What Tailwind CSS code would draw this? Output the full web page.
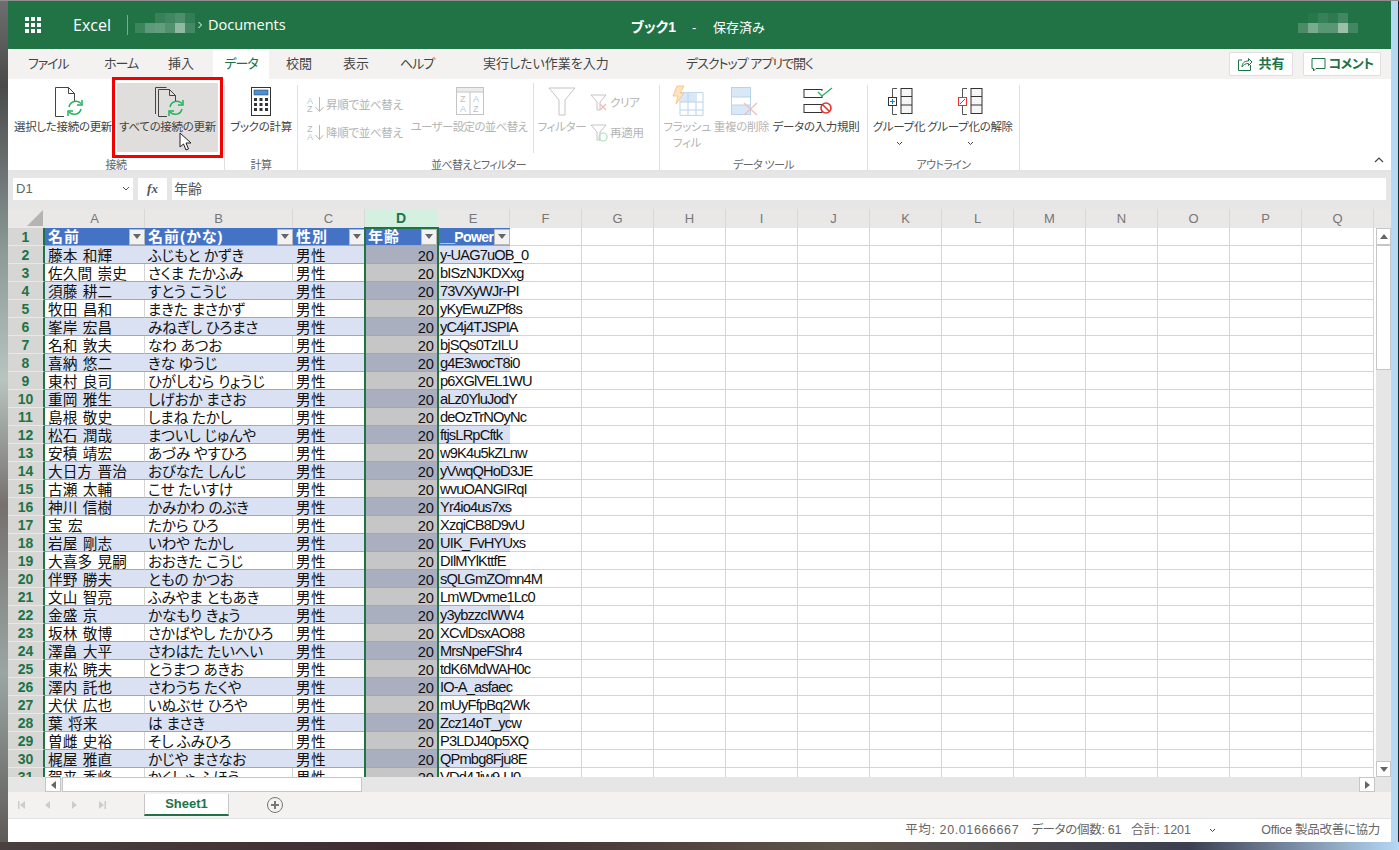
<!DOCTYPE html>
<html lang="ja">
<head>
    <meta charset="UTF-8" />
    <title>ブック1 - Excel</title>
    <script src="https://cdn.jsdelivr.net/npm/@tailwindcss/browser@4"></script>
</head>
<body class="bg-[#3a3535] font-['Liberation_Sans','Noto_Sans_CJK_JP',sans-serif] [font-feature-settings:'palt'] overflow-hidden">
<div class="w-[1399px] h-[850px] flex flex-col overflow-hidden">
    <div class="h-px bg-[#8f8f8f]"></div>
    <div class="flex h-[841px]">
        <div class="w-2 bg-[linear-gradient(180deg,#6e6e6e_0%,#4a4a4a_10%,#8c9a98_30%,#b8c4c0_45%,#76706e_60%,#9aa6a4_80%,#5e5a58_100%)]"></div>

        <!-- Excel window -->
        <div class="w-[1383px] flex flex-col bg-white">
            <!-- Title bar -->
            <div class="h-[48px] bg-[#217346] flex items-center text-white relative shrink-0">
                <svg class="ml-[17px]" width="16" height="16" viewBox="0 0 16 16" fill="#fff">
                    <rect x="0" y="0" width="4" height="4"/><rect x="6" y="0" width="4" height="4"/><rect x="12" y="0" width="4" height="4"/>
                    <rect x="0" y="6" width="4" height="4"/><rect x="6" y="6" width="4" height="4"/><rect x="12" y="6" width="4" height="4"/>
                    <rect x="0" y="12" width="4" height="4"/><rect x="6" y="12" width="4" height="4"/><rect x="12" y="12" width="4" height="4"/>
                </svg>
                <span class="ml-[32px] w-[54px] text-[16px] font-['Open_Sans',sans-serif]">Excel</span>
                <div class="w-px h-[20px] bg-white/40"></div>
                <svg class="ml-[7px]" width="60" height="24" viewBox="0 0 60 24" fill="#fff">
                    <rect x="0" y="10" width="10" height="10" opacity=".12"/><rect x="10" y="10" width="10" height="10" opacity=".28"/>
                    <rect x="20" y="0" width="10" height="10" opacity=".1"/><rect x="20" y="10" width="10" height="10" opacity=".3"/>
                    <rect x="30" y="0" width="10" height="10" opacity=".14"/><rect x="30" y="10" width="10" height="10" opacity=".22"/>
                    <rect x="40" y="0" width="10" height="10" opacity=".2"/><rect x="40" y="10" width="10" height="10" opacity=".5"/>
                    <rect x="50" y="0" width="10" height="10" opacity=".08"/><rect x="50" y="10" width="10" height="10" opacity=".16"/>
                </svg>
                <svg class="ml-[2px]" width="6" height="8" viewBox="0 0 6 8" fill="none" stroke="#fff"><path d="M1.5 1l3 3-3 3"/></svg>
                <span class="ml-[5px] text-[14.500px] font-['Open_Sans',sans-serif]">Documents</span>
                <div class="absolute left-[623px] top-[16px] flex items-center">
                    <span class="text-[14px] font-bold w-[61px]">ブック1</span>
                    <span class="text-[13px] w-[21px]">-</span>
                    <span class="text-[13px]">保存済み</span>
                </div>
                <svg class="absolute left-[1290px] top-[12px]" width="60" height="26" viewBox="0 0 60 26" fill="#fff">
                    <rect x="10" y="0" width="10" height="10" opacity=".03"/><rect x="20" y="0" width="10" height="10" opacity=".1"/>
                    <rect x="30" y="0" width="10" height="10" opacity=".06"/><rect x="40" y="0" width="10" height="10" opacity=".15"/>
                    <rect x="0" y="10" width="10" height="10" opacity=".18"/><rect x="10" y="10" width="10" height="10" opacity=".4"/>
                    <rect x="20" y="10" width="10" height="10" opacity=".25"/><rect x="30" y="10" width="10" height="10" opacity=".25"/>
                    <rect x="40" y="10" width="10" height="10" opacity=".55"/><rect x="50" y="10" width="10" height="10" opacity=".15"/>
                </svg>
            </div>

            <!-- Tabs -->
            <div class="h-[30px] bg-[#f3f2f1] flex items-center text-[13px] text-[#444] relative shrink-0">
                <span class="ml-[20px] w-[76px] tracking-[-1.200px]">ファイル</span>
                <span class="w-[64px] tracking-[-1px]">ホーム</span>
                <span class="w-[45px]">挿入</span>
                <span class="w-[56px] h-full bg-white text-[#217346] flex items-center justify-center tracking-[-1px]">データ</span>
                <span class="ml-[17px] w-[57px]">校閲</span>
                <span class="w-[57px]">表示</span>
                <span class="w-[83px] tracking-[-1px]">ヘルプ</span>
                <span class="w-[203px]">実行したい作業を入力</span>
                <span class="tracking-[-1px]">デスクトップ アプリで開く</span>
                <div class="ml-auto mr-[10px] flex gap-[10px] font-bold text-[#217346]">
                    <div class="w-[64px] h-[24px] bg-white border border-[#e1dfdd] rounded-[2px] flex items-center justify-center gap-[5px]">
                        <svg width="16" height="16" viewBox="0 0 16 16" fill="none" stroke="#217346"><path d="M5 4H1.5v10.5h12V9"/><path d="M5 11c0-4 2.5-6 6.5-6V2.5L15 6l-3.500 3.500V7.500C8.500 7.500 6.500 8.500 5 11z"/></svg>
                        <span>共有</span>
                    </div>
                    <div class="w-[78px] h-[24px] bg-white border border-[#e1dfdd] rounded-[2px] flex items-center justify-center gap-[3px]">
                        <svg width="15" height="15" viewBox="0 0 15 15" fill="none" stroke="#217346"><path d="M1 1.500h13v10H5l-2.500 2.500v-2.500H1z"/></svg>
                        <span class="tracking-[-.6px]">コメント</span>
                    </div>
                </div>
            </div>

            <!-- Ribbon -->
            <div class="h-[93px] bg-white border-b-2 border-[#e4e4e4] flex relative shrink-0 text-[11.500px] tracking-[-.3px] leading-[16px] text-[#444]">
                <!-- 接続 -->
                <div class="w-[216px] flex flex-col">
                    <div class="h-[76px] flex pt-[4px] pl-px">
                        <div class="w-[108px] flex flex-col items-center pt-[4px]">
                            <svg class="ml-[9px]" width="30" height="32" viewBox="0 0 30 32" fill="none">
                                <path d="M11 29.500H2.500V.500h13l6 6v8" stroke="#444"/><path d="M15.500.500v6h6" stroke="#444"/>
                                <path d="M16 20a7 7 0 0 1 12-3.500M28 22a7 7 0 0 1-12 3" stroke="#1fb35c" stroke-width="1.500"/>
                                <path d="M29 13v5h-5M15 29v-5h5" stroke="#1fb35c" stroke-width="1.500"/>
                            </svg>
                            <span class="whitespace-nowrap">選択した接続の更新</span>
                        </div>
                        <div class="w-[101px] h-[69px] bg-[#dfdedc] flex flex-col items-center pt-[4px]">
                            <svg class="ml-[3px]" width="30" height="32" viewBox="0 0 30 32" fill="none">
                                <path d="M1.500 27V.500h11" stroke="#444"/><path d="M13 29.500H4.500V2.500h11l6 6v6" stroke="#444"/><path d="M15.500 2.500v6h6" stroke="#444"/>
                                <path d="M16 20a7 7 0 0 1 12-3.500M28 22a7 7 0 0 1-12 3" stroke="#1fb35c" stroke-width="1.500"/>
                                <path d="M29 13v5h-5M15 29v-5h5" stroke="#1fb35c" stroke-width="1.500"/>
                            </svg>
                            <span class="whitespace-nowrap">すべての接続の更新</span>
                        </div>
                    </div>
                    <div class="h-[15px] pt-[2px] text-center text-[11px] tracking-[-.6px] text-[#666]">接続</div>
                </div>
                <div class="w-px h-[85px] mt-[6px] bg-[#e1dfdd]"></div>

                <!-- 計算 -->
                <div class="w-[72px] flex flex-col">
                    <div class="h-[76px] flex flex-col items-center pt-[8px]">
                        <svg class="mb-[3px]" width="20" height="29" viewBox="0 0 20 29" fill="none">
                            <rect x=".5" y=".5" width="19" height="28" stroke="#333"/>
                            <rect x="3" y="3" width="14" height="5" fill="#4a90d9" stroke="#333" stroke-width=".5"/>
                            <g fill="#333">
                                <rect x="3" y="11" width="3" height="3"/><rect x="8.500" y="11" width="3" height="3"/><rect x="14" y="11" width="3" height="3"/>
                                <rect x="3" y="16" width="3" height="3"/><rect x="8.500" y="16" width="3" height="3"/><rect x="14" y="16" width="3" height="3"/>
                                <rect x="3" y="21" width="3" height="3"/><rect x="8.500" y="21" width="3" height="3"/><rect x="14" y="21" width="3" height="3"/>
                            </g>
                        </svg>
                        <span class="whitespace-nowrap">ブックの計算</span>
                    </div>
                    <div class="h-[15px] pt-[2px] text-center text-[11px] tracking-[-.6px] text-[#666]">計算</div>
                </div>
                <div class="w-px h-[85px] mt-[6px] bg-[#e1dfdd]"></div>

                <!-- 並べ替えとフィルター -->
                <div class="w-[361px] flex flex-col text-[#b4b4b4]">
                    <div class="h-[76px] flex">
                        <div class="w-[111px] pl-[9px] pt-[17px] flex flex-col gap-[11px]">
                            <div class="flex items-center h-[17px] gap-[2px]">
                                <svg width="17" height="17" viewBox="0 0 17 17" font-size="9" font-family="Liberation Sans"><text x="0" y="8" fill="#a9d0ee">A</text><text x="0" y="16" fill="#b8b8b8">Z</text><path d="M12.500 1v14M8.500 11l4 4.500 4-4.500" fill="none" stroke="#b8b8b8"/></svg>
                                <span class="whitespace-nowrap">昇順で並べ替え</span>
                            </div>
                            <div class="flex items-center h-[17px] gap-[2px]">
                                <svg width="17" height="17" viewBox="0 0 17 17" font-size="9" font-family="Liberation Sans"><text x="0" y="8" fill="#b8b8b8">Z</text><text x="0" y="16" fill="#a9d0ee">A</text><path d="M12.500 1v14M8.500 11l4 4.500 4-4.500" fill="none" stroke="#b8b8b8"/></svg>
                                <span class="whitespace-nowrap">降順で並べ替え</span>
                            </div>
                        </div>
                        <div class="w-[124px] flex flex-col items-center pt-[8px]">
                            <svg class="mb-[4px] ml-[-3px]" width="28" height="28" viewBox="0 0 28 28" font-size="9" font-family="Liberation Sans" fill="none">
                                <rect x=".5" y=".5" width="27" height="27" stroke="#c4c4c4"/><rect x="1" y="1" width="26" height="4" fill="#ececec"/>
                                <path d="M.5 5h27M14 5v23" stroke="#c4c4c4"/>
                                <text x="4" y="15" fill="#c0c0c0">Z</text><text x="4" y="25" fill="#a9d0ee">A</text>
                                <text x="17" y="15" fill="#a9d0ee">A</text><text x="17" y="25" fill="#c0c0c0">Z</text>
                            </svg>
                            <span class="whitespace-nowrap ml-[-4px] tracking-[-.65px]">ユーザー設定の並べ替え</span>
                        </div>
                        <div class="w-px h-[70px] mt-[4px] bg-[#e1dfdd]"></div>
                        <div class="w-[56px] flex flex-col items-center pt-[8px]">
                            <svg class="mb-[3px]" width="28" height="29" viewBox="0 0 28 29" fill="none" stroke="#c4c4c4"><path d="M1 1h26L17 13v15h-6V13z"/></svg>
                            <span class="whitespace-nowrap">フィルター</span>
                        </div>
                        <div class="flex flex-col pt-[15px] gap-[12px]">
                            <div class="flex items-center h-[18px] gap-[2px]">
                                <svg width="18" height="18" viewBox="0 0 18 18" fill="none"><path d="M1 1h15l-6 7v8H7V8z" stroke="#c4c4c4"/><path d="M10 10l6 6M16 10l-6 6" stroke="#f2b8b8" stroke-width="1.200"/></svg>
                                <span>クリア</span>
                            </div>
                            <div class="flex items-center h-[18px] gap-[2px]">
                                <svg width="18" height="18" viewBox="0 0 18 18" fill="none"><path d="M1 1h15l-6 7v8H7V8z" stroke="#c4c4c4"/><circle cx="13" cy="13" r="4" stroke="#a8dfbd" stroke-width="1.200"/></svg>
                                <span>再適用</span>
                            </div>
                        </div>
                    </div>
                    <div class="h-[15px] pt-[2px] text-center text-[11px] tracking-[-.6px] text-[#666]">並べ替えとフィルター</div>
                </div>
                <div class="w-px h-[85px] mt-[6px] bg-[#e1dfdd]"></div>

                <!-- データ ツール -->
                <div class="w-[207px] flex flex-col text-[#b4b4b4]">
                    <div class="h-[76px] flex">
                        <div class="w-[54px] flex flex-col items-center pt-[6px] text-center">
                            <svg class="mb-[2px] ml-[2px]" width="32" height="32" viewBox="0 0 32 32" fill="none">
                                <path d="M8 8h23v24H8z" transform="scale(1 .95)" stroke="#b8d4ea"/><rect x="9" y="8" width="14" height="9" fill="#d8e8f6"/>
                                <path d="M8 17h23M8 25h23M16 8v23M24 8v23" stroke="#b8d4ea"/>
                                <path d="M5 1h7L8 8h4L4 19l2-8H1z" fill="#fde3c4" stroke="#f7c88d"/>
                            </svg>
                            <span class="whitespace-nowrap">フラッシュ<br />フィル</span>
                        </div>
                        <div class="w-[55px] flex flex-col items-center pt-[8px]">
                            <svg class="mb-[3px] ml-[11px]" width="32" height="29" viewBox="0 0 32 29" fill="none">
                                <rect x=".5" y=".5" width="19" height="27" stroke="#b8d4ea"/><rect x="1" y="1" width="18" height="9" fill="#d8e8f6"/><rect x="1" y="18" width="18" height="9" fill="#d8e8f6"/>
                                <path d="M1 10h18M1 18h18" stroke="#b8d4ea"/>
                                <path d="M13 16l13 12M26 16L13 28" stroke="#f6bcbc" stroke-width="1.300"/>
                            </svg>
                            <span class="whitespace-nowrap">重複の削除</span>
                        </div>
                        <div class="w-[94px] flex flex-col items-center pt-[8px] text-[#444]">
                            <svg class="mb-[3px] ml-[3px]" width="32" height="29" viewBox="0 0 32 29" fill="none">
                                <rect x="2" y="2.500" width="18" height="8" stroke="#333" fill="#fff"/><rect x="2" y="17.500" width="18" height="8" stroke="#333" fill="#fff"/>
                                <path d="M16 5l4 4 10-8" stroke="#1fb35c" stroke-width="1.300" fill="#fff"/>
                                <circle cx="24" cy="21" r="5" stroke="#e8322c" stroke-width="1.600" fill="#fff"/><path d="M20.500 17.500l7 7" stroke="#e8322c" stroke-width="1.600"/>
                            </svg>
                            <span class="whitespace-nowrap">データの入力規則</span>
                        </div>
                    </div>
                    <div class="h-[15px] pt-[2px] text-center text-[11px] tracking-[-.6px] text-[#666]">データ ツール</div>
                </div>
                <div class="w-px h-[85px] mt-[6px] bg-[#e1dfdd]"></div>

                <!-- アウトライン -->
                <div class="w-[151px] flex flex-col">
                    <div class="h-[76px] flex">
                        <div class="w-[62px] flex flex-col items-center pt-[8px]">
                            <svg class="mb-[3px] ml-[2px]" width="26" height="29" viewBox="0 0 26 29" fill="none">
                                <path d="M10 1.500H5.500v9M5.500 18v9.500H10" stroke="#555"/>
                                <rect x="14" y="1.500" width="11" height="25" stroke="#333" fill="#f6f6f6"/><path d="M14 9.500h11M14 18h11" stroke="#333"/>
                                <rect x="1.500" y="10.500" width="8" height="8" stroke="#333" fill="#fff"/><path d="M5.500 12v5M3 14.500h5" stroke="#0f7fd8"/>
                            </svg>
                            <span class="whitespace-nowrap">グループ化</span>
                            <svg class="mt-[6px]" width="7" height="5" viewBox="0 0 7 5" fill="none" stroke="#444"><path d="M1 1l2.500 2.500L6 1"/></svg>
                        </div>
                        <div class="w-[80px] flex flex-col items-center pt-[8px]">
                            <svg class="mb-[3px]" width="26" height="29" viewBox="0 0 26 29" fill="none">
                                <path d="M10 1.500H5.500v9M5.500 18v9.500H10" stroke="#555"/>
                                <rect x="14" y="1.500" width="11" height="25" stroke="#333" fill="#f6f6f6"/><path d="M14 9.500h11M14 18h11" stroke="#333"/>
                                <rect x="1.500" y="10.500" width="8" height="8" stroke="#e8322c" fill="#fff"/><path d="M3 17l5-5" stroke="#e8322c"/>
                            </svg>
                            <span class="whitespace-nowrap">グループ化の解除</span>
                            <svg class="mt-[6px]" width="7" height="5" viewBox="0 0 7 5" fill="none" stroke="#444"><path d="M1 1l2.500 2.500L6 1"/></svg>
                        </div>
                    </div>
                    <div class="h-[15px] pt-[2px] text-center text-[11px] tracking-[-.6px] text-[#666]">アウトライン</div>
                </div>
                <div class="w-px h-[85px] mt-[6px] bg-[#e1dfdd]"></div>

                <svg class="absolute left-[1366px] top-[77px]" width="10" height="7" viewBox="0 0 10 7" fill="none" stroke="#444" stroke-width="1.200"><path d="M1 6l4-4 4 4"/></svg>

                <!-- highlight and mouse pointer over the refresh button -->
                <div class="absolute left-[104px] top-[-2px] w-[111px] h-[81px] border-[3px] border-[#f30000]"></div>
                <svg class="absolute left-[171px] top-[53px]" width="14" height="20" viewBox="0 0 14 20"><path d="M1 1v14l3.500-3 2.500 6 2.500-1-2.500-6H12z" fill="#fff" stroke="#222"/></svg>
            </div>

            <!-- Formula bar -->
            <div class="h-[37px] bg-[#e6e6e6] flex pt-[6px] pl-[5px] pr-[5px] gap-[5px] text-[13px] shrink-0">
                <div class="w-[120px] h-[22px] bg-white flex items-center justify-between px-[3px] text-[#666]">
                    <span>D1</span>
                    <svg width="8" height="6" viewBox="0 0 8 6" fill="none" stroke="#555"><path d="M1 1l3 3 3-3"/></svg>
                </div>
                <div class="w-[29px] h-[22px] bg-white flex items-center justify-center text-[#555] italic font-['Liberation_Serif',serif] font-bold">fx</div>
                <div class="flex-1 h-[22px] bg-white flex items-center px-[2px] text-[#555] text-[14px]">年齢</div>
            </div>

            <!-- Sheet -->
            <div class="flex-1 flex flex-col min-h-0">
                <div class="h-[568px] relative overflow-hidden flex flex-col shrink-0">
                    <div id="colHead" class="h-[19px] flex bg-[#e9e8e6] shrink-0"></div>
                    <div id="rows" class="flex flex-col"></div>
                    <!-- selected column D -->
                    <div class="absolute left-[356px] top-[18px] w-[75px] h-[600px] border-2 border-[#217346]"></div>
                    <!-- vertical scrollbar -->
                    <div class="absolute left-[1368px] top-[19px] w-[15px] h-[549px] bg-[#e6e6e6] flex flex-col">
                        <div class="h-[17px] bg-white border border-[#c6c6c6] flex items-center justify-center">
                            <svg width="8" height="5" viewBox="0 0 8 5" fill="#666"><path d="M4 0l4 5H0z"/></svg>
                        </div>
                        <div class="h-[125px] bg-white border border-[#c6c6c6]"></div>
                        <div class="h-[16px] mt-auto bg-white border border-[#c6c6c6] flex items-center justify-center">
                            <svg width="8" height="5" viewBox="0 0 8 5" fill="#666"><path d="M4 5l4-5H0z"/></svg>
                        </div>
                    </div>
                </div>

                <!-- horizontal scrollbar -->
                <div class="h-[15px] bg-[#e6e6e6] flex pl-[37px] shrink-0 relative">
                    <div class="w-[16px] h-[15px] bg-white border border-[#c6c6c6] flex items-center justify-center">
                        <svg width="5" height="8" viewBox="0 0 5 8" fill="#666"><path d="M0 4l5-4v8z"/></svg>
                    </div>
                    <div class="w-[300px] h-[15px] ml-px bg-white border border-[#c6c6c6]"></div>
                    <div class="absolute left-[1351px] top-0 w-[16px] h-[15px] bg-white border border-[#c6c6c6] flex items-center justify-center">
                        <svg width="5" height="8" viewBox="0 0 5 8" fill="#666"><path d="M5 4L0 0v8z"/></svg>
                    </div>
                </div>

                <!-- sheet tabs -->
                <div class="h-[27px] bg-[#f3f2f1] border-b border-[#e1e1e1] flex items-start shrink-0">
                    <div class="w-[136px] h-[26px] flex items-center pl-[10px] gap-[20px]">
                        <svg width="7" height="8" viewBox="0 0 7 8" fill="#ccc"><path d="M0 0h1.500v8H0zM7 0v8L2 4z"/></svg>
                        <svg width="5" height="8" viewBox="0 0 5 8" fill="#ccc"><path d="M5 0v8L0 4z"/></svg>
                        <svg class="ml-[2px]" width="5" height="8" viewBox="0 0 5 8" fill="#ccc"><path d="M0 0v8l5-4z"/></svg>
                        <svg class="ml-[2px]" width="7" height="8" viewBox="0 0 7 8" fill="#ccc"><path d="M5.500 0H7v8H5.500zM0 0v8l5-4z"/></svg>
                    </div>
                    <div class="w-[85px] h-[22px] mt-[2px] bg-white border-x border-[#c6c6c6] border-b-2 border-b-[#217346] flex items-center justify-center text-[13px] font-bold text-[#217346]">Sheet1</div>
                    <svg class="ml-[38px] mt-[5px]" width="16" height="16" viewBox="0 0 16 16" fill="none" stroke="#777"><circle cx="8" cy="8" r="7.500"/><path d="M8 4v8M4 8h8" stroke-width="2"/></svg>
                </div>

                <!-- status bar -->
                <div class="h-[22px] flex items-center justify-end text-[12.500px] text-[#666] pr-[11px] shrink-0">
                    <span class="w-[126px] whitespace-nowrap tracking-[.6px]">平均: 20.01666667</span>
                    <span class="w-[100px] whitespace-nowrap tracking-[-.3px]">データの個数: 61</span>
                    <span class="w-[78px] whitespace-nowrap">合計: 1201</span>
                    <svg class="mr-[45px]" width="7" height="5" viewBox="0 0 7 5" fill="none" stroke="#444"><path d="M1 1l2.500 2.500L6 1"/></svg>
                    <span class="whitespace-nowrap tracking-[-.3px]">Office 製品改善に協力</span>
                </div>
            </div>
        </div>

        <div class="w-2 bg-[linear-gradient(90deg,#b5d8f5_0%,#b5d8f5_85%,#20242c_85%)]"></div>
    </div>
    <div class="h-2 bg-[linear-gradient(90deg,#4a4040_0%,#3d2a30_30%,#5e5448_60%,#3c3f52_85%,#b5d8f5_100%)]"></div>
</div>

<script>
    const people = `藤本 和輝|ふじもと かずき|y-UAG7uOB_0
佐久間 崇史|さくま たかふみ|bISzNJKDXxg
須藤 耕二|すとう こうじ|73VXyWJr-PI
牧田 昌和|まきた まさかず|yKyEwuZPf8s
峯岸 宏昌|みねぎし ひろまさ|yC4j4TJSPIA
名和 敦夫|なわ あつお|bjSQs0TzILU
喜納 悠二|きな ゆうじ|g4E3wocT8i0
東村 良司|ひがしむら りょうじ|p6XGlVEL1WU
重岡 雅生|しげおか まさお|aLz0YluJodY
島根 敬史|しまね たかし|deOzTrNOyNc
松石 潤哉|まついし じゅんや|ftjsLRpCftk
安積 靖宏|あづみ やすひろ|w9K4u5kZLnw
大日方 晋治|おびなた しんじ|yVwqQHoD3JE
古瀬 太輔|こせ たいすけ|wvuOANGIRqI
神川 信樹|かみかわ のぶき|Yr4io4us7xs
宝 宏|たから ひろ|XzqiCB8D9vU
岩屋 剛志|いわや たかし|UIK_FvHYUxs
大喜多 晃嗣|おおきた こうじ|DIlMYlKttfE
伴野 勝夫|ともの かつお|sQLGmZOmn4M
文山 智亮|ふみやま ともあき|LmWDvme1Lc0
金盛 京|かなもり きょう|y3ybzzcIWW4
坂林 敬博|さかばやし たかひろ|XCvlDsxAO88
澤畠 大平|さわはた たいへい|MrsNpeFShr4
東松 暁夫|とうまつ あきお|tdK6MdWAH0c
澤内 託也|さわうち たくや|IO-A_asfaec
犬伏 広也|いぬぶせ ひろや|mUyFfpBq2Wk
葉 将来|は まさき|Zcz14oT_ycw
曽雌 史裕|そし ふみひろ|P3LDJ40p5XQ
梶屋 雅直|かじや まさなお|QPmbg8Fju8E
賀来 秀峰|かくしゃ ふほう|VDd4Jjw9-U0`.split("\n").map(l => l.split("|"));

    const emptyCells = '<div class="w-[72px] h-full border-r border-b border-[#d4d4d4]"></div>'.repeat(12);
    const rowHead = n => `<div class="w-[37px] h-full bg-[#d6d6d4] border-r-2 border-[#217346] border-b border-b-[#e8e8e8] flex items-center justify-center text-[14px] font-bold text-[#217346] pt-[2px]">${n}</div>`;
    const filterBtn = '<div class="w-4 h-4 bg-[#f2f2f2] border border-[#b8b8b8] flex items-center justify-center shrink-0"><svg width="8" height="5" viewBox="0 0 8 5" fill="#666"><path d="M0 0h8L4 5z"/></svg></div>';
    const headCell = (width, label, type = "text-[15px] tracking-[1px]") => `<div class="${width} h-full bg-[#4472c4] flex items-center text-white font-bold ${type} border-b border-[#8ea9db]"><span class="flex-1 min-w-0 overflow-hidden whitespace-nowrap pl-[3px] pt-[2px]">${label}</span>${filterBtn}</div>`;

    document.getElementById("colHead").innerHTML =
        '<div class="w-[37px] h-full flex items-end justify-end pr-[2px] pb-[2px]"><svg width="16" height="16" viewBox="0 0 16 16" fill="#b4b4b4"><path d="M16 0v16H0z"/></svg></div>' +
        [["A", "w-[100px]"], ["B", "w-[148px]"], ["C", "w-[72px]"]].map(([c, w]) =>
            `<div class="${w} h-full flex items-center justify-center text-[13px] text-[#777] border-r border-[#d8d8d8]">${c}</div>`).join("") +
        '<div class="w-[72px] h-full flex items-center justify-center text-[14px] font-bold text-[#217346] bg-[#d3f0e0]">D</div>' +
        '<div class="w-[73px] h-full flex items-center justify-center text-[13px] text-[#777] border-r border-[#d8d8d8]">E</div>' +
        "FGHIJKLMNOPQ".split("").map(c =>
            `<div class="w-[72px] h-full flex items-center justify-center text-[13px] text-[#777] border-r border-[#d8d8d8]">${c}</div>`).join("");

    let html = `<div class="flex h-[18px] shrink-0">${rowHead(1)}${headCell("w-[100px]", "名前")}${headCell("w-[148px]", "名前(かな)")}${headCell("w-[72px]", "性別")}${headCell("w-[72px]", "年齢")}${headCell("w-[73px]", "__PowerAppsId__", "text-[14px] tracking-[-.6px]")}${emptyCells}</div>`;

    people.forEach(([name, kana, id], i) => {
        const band = i % 2 === 0;
        const bg = band ? "bg-[#d9e1f2]" : "border-r border-r-[#d4d4d4]";
        const dBg = band ? "bg-[#a9afbf]" : "bg-[#c6c6c6]";
        html += `<div class="flex h-[18px] shrink-0 text-[14.670px] text-[#111]">${rowHead(i + 2)}
            <div class="w-[100px] h-full ${bg} border-b border-b-[#8ea9db] flex items-center pl-[3px] pt-[2px] whitespace-nowrap tracking-[.1px] [word-spacing:1px]">${name}</div>
            <div class="w-[148px] h-full ${bg} border-b border-b-[#8ea9db] flex items-center pl-[3px] pt-[2px] whitespace-nowrap tracking-[-.2px]">${kana}</div>
            <div class="w-[72px] h-full ${bg} border-b border-b-[#8ea9db] flex items-center pl-[3px] pt-[2px] whitespace-nowrap tracking-[.4px]">男性</div>
            <div class="w-[72px] h-full ${dBg} border-b border-b-[#8ea9db] flex items-center justify-end pr-[3px] pt-[2px]">20</div>
            <div class="w-[73px] h-full ${band ? "bg-[#d9e1f2]" : ""} border-b border-b-[#8ea9db] flex items-center pl-[3px] whitespace-nowrap tracking-[-.85px]">${id}</div>
            ${emptyCells}</div>`;
    });
    document.getElementById("rows").innerHTML = html;
</script>
</body>
</html>
